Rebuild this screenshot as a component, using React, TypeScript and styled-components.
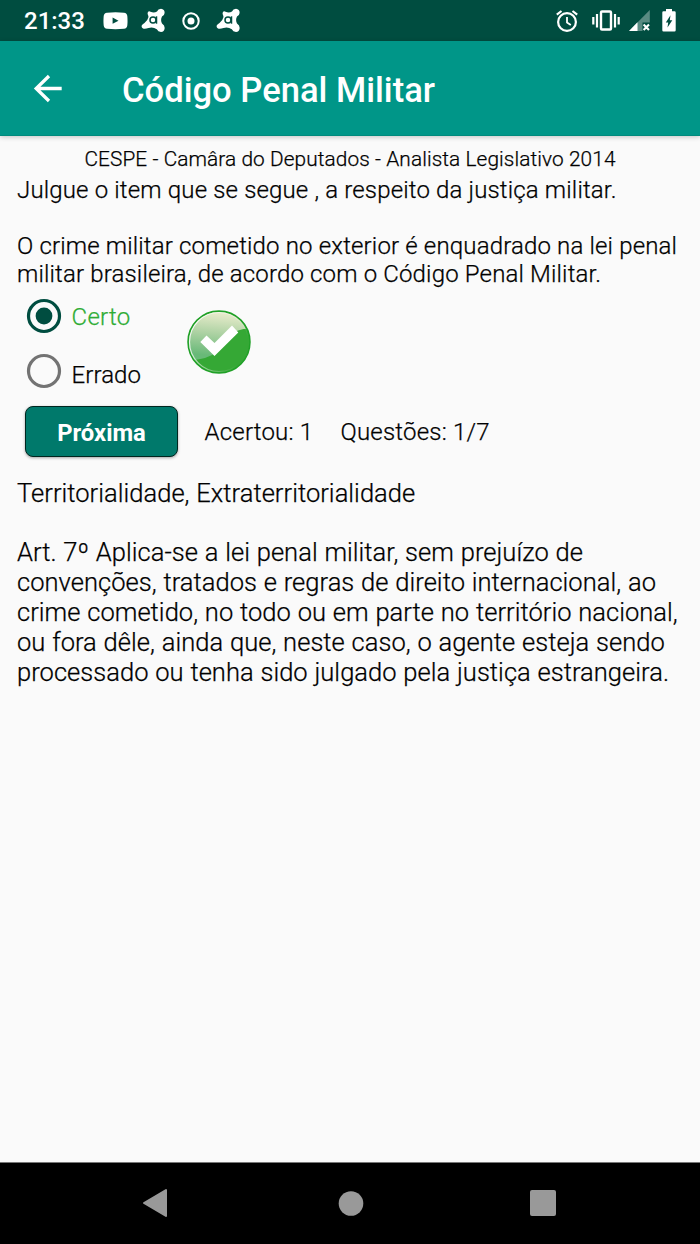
import React from "react";
import styled, { createGlobalStyle } from "styled-components";

const GlobalStyle = createGlobalStyle`
  * { box-sizing: border-box; }
  body { margin: 0; background: #fafafa; font-family: Roboto, sans-serif; }
`;

const Screen = styled.div`
  width: 700px;
  height: 1244px;
  display: flex;
  flex-direction: column;
  background: #fafafa;
  color: #000;
  overflow: hidden;
`;

const StatusBar = styled.div`
  height: 41px;
  flex: none;
  display: flex;
  align-items: center;
  justify-content: space-between;
  background: #004d40;
  color: #fff;
`;

const Clock = styled.span`
  width: 79px;
  padding: 2px 0 0 24px;
  font-size: 24px;
  font-weight: 500;
  line-height: 41px;
  white-space: nowrap;
`;

const StatusGroup = styled.div`
  display: flex;
  align-items: center;
  height: 41px;
`;

const Glyph = styled.svg`
  display: block;
  flex: none;
`;

const AppBar = styled.header`
  height: 95px;
  flex: none;
  display: flex;
  align-items: center;
  padding-left: 32px;
  background: #009688;
  color: #fff;
  border-bottom: 1px solid #008a7d;
  box-shadow: 0 1px 5px rgba(0, 0, 0, 0.22);
`;

const Title = styled.h1`
  margin: 4px 0 0 58px;
  font-size: 34.6px;
  font-weight: 500;
  line-height: 40px;
  white-space: nowrap;
`;

const Content = styled.main`
  flex: 1;
  display: flex;
  flex-direction: column;
  padding: 9px 17px 0;
`;

const Text = styled.p<{ $size: number; $line: number; $spacing?: number; $words?: number }>`
  margin: 0;
  font-size: ${(p) => p.$size}px;
  font-weight: 300;
  line-height: ${(p) => p.$line}px;
  letter-spacing: ${(p) => p.$spacing ?? 0}px;
  word-spacing: ${(p) => p.$words ?? 0}px;
  white-space: pre;
  -webkit-text-stroke: 0.25px currentColor;
`;

const Source = styled(Text)`
  margin-bottom: 3px;
  text-align: center;
`;

const AnswerRow = styled.div`
  display: flex;
  height: 118px;
  padding-left: 8px;
`;

const Options = styled.div`
  width: 161px;
  display: flex;
  flex-direction: column;
`;

const Option = styled.label<{ $color: string; $drop: number; $spacing: number }>`
  height: 54.5px;
  display: flex;
  padding-top: 9px;
  gap: 8.5px;
  color: ${(p) => p.$color};

  span {
    padding-top: ${(p) => p.$drop}px;
    font-size: 24px;
    font-weight: 300;
    line-height: 30px;
    letter-spacing: ${(p) => p.$spacing}px;
    -webkit-text-stroke: 0.25px currentColor;
  }
`;

const ResultMark = styled.div`
  padding-top: 20.5px;
`;

const ActionRow = styled.div`
  display: flex;
  align-items: center;
  height: 52px;
  padding-left: 8px;
`;

const NextButton = styled.button`
  width: 153px;
  height: 51px;
  margin: 0 26.5px 1px 0;
  padding: 2px 0 0;
  border: 1.5px solid #00261f;
  border-radius: 8px;
  background: #00796b;
  box-shadow: 0 1px 3px rgba(0, 0, 0, 0.35);
  color: #fff;
  font: 700 23.8px/28px Roboto, sans-serif;
`;

const Score = styled(Text)`
  width: 136px;
`;

const Article = styled.section`
  padding-top: 20.6px;
`;

const NavBar = styled.nav`
  height: 82px;
  flex: none;
  display: flex;
  align-items: center;
  justify-content: space-between;
  padding: 0 143px 1px 142px;
  background: #000;
  border-top: 1px solid #777;
`;

const VideoIcon = () => (
  <Glyph width="25" height="18" viewBox="0 0 25 18">
    <path fill="#fff" fillRule="evenodd" d="M4 .7Q12.5-.2 21 .7Q24 1 24.3 4Q24.8 9 24.3 13.500Q24 16.500 21 16.800Q12.500 17.700 4 16.800Q1 16.500.700 13.500Q.200 9 .700 4Q1 1 4 .700ZM9.600 5.600V11.800L15.500 8.700Z" />
  </Glyph>
);

const AntivirusIcon = () => (
  <Glyph width="25" height="25" viewBox="0 0 25 25">
    <path
      fill="#fff"
      d="M7 4Q7.800 2.900 9.500 3.700Q13 5.200 16 3.500Q17 .800 20 .800Q23.800 1.300 23.600 5Q23.400 7.500 21 8.500Q19.200 12 21 15.500Q23.700 17 23.700 20Q23.300 23.800 20 24Q17 23.800 15.800 21.200Q12 18.700 7.500 20Q4 21.300 2 20.500Q-.200 19 1 17Q2 16 3.500 15Q6.800 12.500 7.500 9Q7.400 7.800 6.800 6.500Q6.300 5 7 4Z"
    />
    <circle cx="12" cy="12" r="3" fill="none" stroke="#004d40" strokeWidth="1.500" />
    <path d="M15.500 8.300V15.700" fill="none" stroke="#004d40" strokeWidth="1.500" />
  </Glyph>
);

const TargetIcon = () => (
  <Glyph width="18" height="18" viewBox="0 0 18 18">
    <circle cx="9" cy="9" r="7.700" fill="none" stroke="#fff" strokeWidth="2" />
    <circle cx="9" cy="9" r="3.500" fill="#fff" />
  </Glyph>
);

const AlarmIcon = () => (
  <Glyph width="22" height="22" viewBox="0 0 22 22" fill="none" stroke="#fff">
    <circle cx="11" cy="12" r="8.900" strokeWidth="2.200" />
    <path d="M11 7V12.500L14.800 15" strokeWidth="1.800" />
    <path d="M.800 4.600L5.500 1M16.500 1L21.200 4.600" strokeWidth="2.200" />
  </Glyph>
);

const VibrateIcon = () => (
  <Glyph width="28" height="22" viewBox="0 0 28 22" fill="none" stroke="#fff" strokeWidth="2.200">
    <rect x="9" y="1.500" width="10" height="18" rx="1" strokeWidth="2.400" />
    <path d="M1.300 7V14.500M5 4V17.500M23 4V17.500M26.700 7V14.500" />
  </Glyph>
);

const SignalIcon = () => (
  <Glyph width="22" height="22" viewBox="0 0 22 22">
    <path fill="#fff" opacity="0.350" d="M20.800 0V12.500H13.500V21H0Z" />
    <path fill="#fff" d="M8.500 12.300V21H0Z" />
    <path d="M14.600 14.600L20 20M20 14.600L14.600 20" stroke="#fff" strokeWidth="2.100" />
  </Glyph>
);

const BatteryIcon = () => (
  <Glyph width="14" height="23" viewBox="0 0 14 23">
    <path fill="#fff" fillRule="evenodd" d="M4 0H10V2.300H12.500Q13.700 2.300 13.700 3.500V21.300Q13.700 22.500 12.500 22.500H1.500Q.300 22.500.300 21.300V3.500Q.300 2.300 1.500 2.300H4ZM8.500 6.200L3.800 13.500H6.200L5.500 18.500L10.300 11.200H7.800Z" />
  </Glyph>
);

const Space = styled.i<{ $w: number }>`
  width: ${(p) => p.$w}px;
`;

const Radio = ({ checked }: { checked?: boolean }) => (
  <Glyph width="38" height="38" viewBox="0 0 38 38">
    <circle cx="19" cy="19" r="15.500" fill="none" stroke={checked ? "#004d40" : "#737373"} strokeWidth="3.200" />
    {checked && <circle cx="19" cy="19" r="8.400" fill="#004d40" />}
  </Glyph>
);

const CheckBadge = () => (
  <Glyph width="66" height="66" viewBox="0 0 66 66">
    <defs>
      <linearGradient id="shine" x1="0.400" y1="0" x2="0.300" y2="0.900">
        <stop offset="0" stopColor="#f1f0d2" />
        <stop offset="0.500" stopColor="#b0d3a5" />
        <stop offset="1" stopColor="#68b978" />
      </linearGradient>
      <linearGradient id="rim" x1="0" y1="0" x2="1" y2="0.400">
        <stop offset="0" stopColor="#fff" />
        <stop offset="1" stopColor="#fff" stopOpacity="0" />
      </linearGradient>
      <clipPath id="disc"><circle cx="33" cy="33" r="30" /></clipPath>
    </defs>
    <circle cx="33" cy="33" r="31" fill="#35a835" stroke="#1fa026" strokeWidth="1.500" />
    <path d="M0 51Q20 52 32 42Q43 18 66 20V0H0Z" fill="url(#shine)" clipPath="url(#disc)" />
    <circle cx="33" cy="33" r="29.500" fill="none" stroke="url(#rim)" strokeWidth="1.200" />
    <path d="M14.300 33L20.500 26.500L28.500 34L46 16.500L52.300 23.500L28.500 47Z" fill="#fff" />
  </Glyph>
);

export default function App() {
  return (
    <Screen>
      <GlobalStyle />
      <StatusBar>
        <StatusGroup>
          <Clock>21:33</Clock>
          <Space $w={24} />
          <VideoIcon />
          <Space $w={13} />
          <AntivirusIcon />
          <Space $w={15.5} />
          <TargetIcon />
          <Space $w={16} />
          <AntivirusIcon />
        </StatusGroup>
        <StatusGroup>
          <AlarmIcon />
          <Space $w={14} />
          <VibrateIcon />
          <Space $w={9} />
          <SignalIcon />
          <Space $w={11} />
          <BatteryIcon />
          <Space $w={24} />
        </StatusGroup>
      </StatusBar>
      <AppBar>
        <Glyph width="32" height="30" viewBox="0 0 32 30">
          <path d="M29.700 15.500H4M17 3L4.200 15.500L17 28" fill="none" stroke="#fff" strokeWidth="3.300" />
        </Glyph>
        <Title>Código Penal Militar</Title>
      </AppBar>
      <Content>
        <Source $size={20.8} $line={28} $spacing={0.1}>CESPE - Camâra do Deputados - Analista Legislativo 2014</Source>
        <Text $size={24} $line={28} $spacing={0.16}>
          {"Julgue o item que se segue , a respeito da justiça militar.\n\nO crime militar cometido no exterior é enquadrado na lei penal\nmilitar brasileira, de acordo com o Código Penal Militar."}
        </Text>
        <AnswerRow>
          <Options>
            <Option $color="#2eac34" $drop={5} $spacing={0.3}><Radio checked /><span>Certo</span></Option>
            <Option $color="#000" $drop={8.5} $spacing={0.1}><Radio /><span>Errado</span></Option>
          </Options>
          <ResultMark><CheckBadge /></ResultMark>
        </AnswerRow>
        <ActionRow>
          <NextButton>Próxima</NextButton>
          <Score $size={24} $line={29} $spacing={0.2}>Acertou: 1</Score>
          <Text $size={24} $line={29} $spacing={0.2}>Questões: 1/7</Text>
        </ActionRow>
        <Article>
          <Text $size={25.5} $line={29.9} $spacing={0.04} $words={0.5}>
            {"Territorialidade, Extraterritorialidade\n\nArt. 7º Aplica-se a lei penal militar, sem prejuízo de\nconvenções, tratados e regras de direito internacional, ao\ncrime cometido, no todo ou em parte no território nacional,\nou fora dêle, ainda que, neste caso, o agente esteja sendo\nprocessado ou tenha sido julgado pela justiça estrangeira."}
          </Text>
        </Article>
      </Content>
      <NavBar>
        <Glyph width="26" height="30" viewBox="0 0 26 30">
          <path d="M2 15L24 2V28Z" fill="#999" stroke="#999" strokeWidth="2" strokeLinejoin="round" />
        </Glyph>
        <Glyph width="30" height="26" viewBox="0 0 30 26"><circle cx="17" cy="13.500" r="12.300" fill="#999" /></Glyph>
        <Glyph width="28" height="28" viewBox="0 0 28 28"><rect x="1" y="1" width="26" height="26" rx="2" fill="#999" /></Glyph>
      </NavBar>
    </Screen>
  );
}
